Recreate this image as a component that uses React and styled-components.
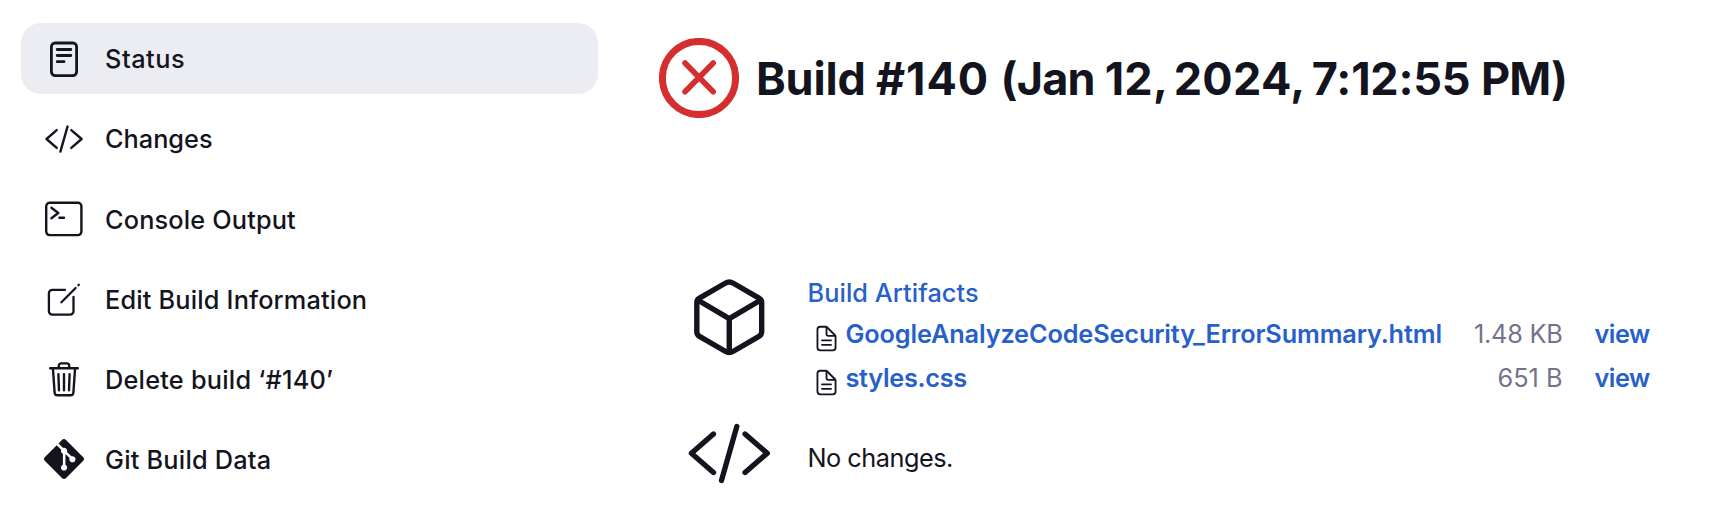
import React from "react";
import styled, { createGlobalStyle } from "styled-components";
import { SiGit } from "react-icons/si";

const GlobalStyle = createGlobalStyle`
  * { box-sizing: border-box; }
  body {
    margin: 0;
    background: #fff;
    color: #14141f;
    font-family: Inter, "Liberation Sans", sans-serif;
    font-size: 25.3px;
  }
`;

const Page = styled.div`
  display: flex;
  align-items: flex-start;
  width: 1736px;
  height: 518px;
  overflow: hidden;
`;

const SidePanel = styled.nav`
  display: flex;
  flex-direction: column;
  gap: 9.2px;
  flex: none;
  width: 577px;
  margin: 23px 0 0 21px;
`;

const Task = styled.a`
  display: flex;
  align-items: center;
  gap: 21px;
  height: 71px;
  padding-left: 23px;
  border-radius: 20px;
  background: ${(p) => (p.$active ? "#ecedf3" : "transparent")};
  svg { flex: none; display: block; }
`;

const Text = styled.span`
  font-weight: ${(p) => p.$weight || 500};
  letter-spacing: ${(p) => p.$spacing || 0}px;
  white-space: nowrap;
`;

const TaskLabel = styled(Text)`
  padding-top: 0.4px;
`;

const Main = styled.main`
  flex: none;
  width: 1000px;
  margin: 38px 0 0 61px;
`;

const Header = styled.header`
  display: flex;
  align-items: center;
  gap: 17px;
  height: 80px;
  svg { flex: none; display: block; }
`;

const Title = styled.h1`
  margin: 1px 0 0;
  font-size: 45px;
  font-weight: 700;
  line-height: 80px;
  white-space: pre;
`;

const TitlePart = styled.span`
  letter-spacing: ${(p) => p.$spacing}px;
  word-spacing: ${(p) => p.$gap || 0}px;
`;

const Section = styled.section`
  display: flex;
  align-items: flex-start;
  gap: 35px;
  margin-top: ${(p) => p.$top}px;
  padding-left: 27px;
  svg { flex: none; display: block; }
`;

const Artifacts = styled.div`
  display: flex;
  flex-direction: column;
`;

const SectionLink = styled(Text)`
  color: #2860cb;
  height: 38px;
  line-height: 38px;
`;

const FileRow = styled.div`
  display: grid;
  grid-template-columns: 24px 596px 131px auto;
  align-items: center;
  height: 44px;
  padding-left: 4px;
  line-height: 44px;
`;

const FileIconCell = styled.span`
  padding: 10px 0 0;
`;

const FileLink = styled(Text)`
  color: #2860cb;
  padding-left: 10px;
`;

const Size = styled(Text)`
  color: #73738c;
  text-align: right;
`;

const ViewLink = styled(Text)`
  color: #2860cb;
  padding-left: 32px;
`;

const Message = styled(Text)`
  line-height: 40px;
  padding-top: 28.3px;
`;

function Icon({ stroke = 2.4, size = 40, box = "0 0 40 40", children }) {
  return (
    <svg
      width={size}
      height={size}
      viewBox={box}
      fill="none"
      stroke="currentColor"
      strokeWidth={stroke}
      strokeLinecap="round"
      strokeLinejoin="round"
    >
      {children}
    </svg>
  );
}

const StatusIcon = () => (
  <Icon stroke={2.8}>
    <rect x="7.4" y="4" width="25.2" height="32.6" rx="3.8" />
    <path d="M13.2 10.5H26.8M13.2 16.5H26.8M13.2 22.7H20" />
  </Icon>
);

const CodeIcon = ({ size, stroke = 2.4 }) => (
  <Icon size={size} stroke={stroke}>
    <path d="M12.7 11.1L2.5 20L12.7 28.9M23.5 7.6L16.4 32.6M27.3 11.1L37.6 20L27.3 28.9" />
  </Icon>
);

const ConsoleIcon = () => (
  <Icon>
    <rect x="2.2" y="3.7" width="35.2" height="32.4" rx="3.5" />
    <path d="M7.4 8.8L14.3 14L7.4 19.2M15.4 18.7H20" />
  </Icon>
);

const EditIcon = () => (
  <Icon stroke={2.3}>
    <path d="M21 10.8H8.4A3.5 3.5 0 0 0 4.9 14.3V32.2A3.5 3.5 0 0 0 8.4 35.7H26A3.5 3.5 0 0 0 29.5 32.2V17.8M17.4 23.2L31.6 9M34.4 6.2L34.8 5.8" />
  </Icon>
);

const TrashIcon = () => (
  <Icon stroke={2.4}>
    <path d="M8.9 9.2L10.6 33.5A3 3 0 0 0 13.5 36.3H26.5A3 3 0 0 0 29.4 33.5L31.1 9.2M6.2 9.2H33.8M14.8 9V6.7A2.3 2.3 0 0 1 17.1 4.4H22.9A2.3 2.3 0 0 1 25.2 6.7V9M14.4 15.2L15 31.2M20 15.2V31.2M25.6 15.2L25 31.2" />
  </Icon>
);

const FailedIcon = () => (
  <svg width="80" height="80" viewBox="0 0 80 80" fill="none" stroke="#d42e2e">
    <circle cx="40" cy="40" r="36.6" strokeWidth="7" />
    <path d="M26 25L54.2 53.8M54.2 25L26 53.8" strokeWidth="5.6" strokeLinecap="round" />
  </svg>
);

const CubeIcon = () => (
  <Icon size={86.5} box="0 0 512 512" stroke={32}>
    <path d="M448 341.37V170.61A32 32 0 00432.11 143l-152-88.46a47.94 47.94 0 00-48.24 0L79.89 143A32 32 0 0064 170.61v170.76A32 32 0 0079.89 369l152 88.46a48 48 0 0048.24 0l152-88.46A32 32 0 00448 341.37z" />
    <path d="M69 153.99l187 110 187-110M256 463.99v-200" />
  </Icon>
);

const FileIcon = () => (
  <Icon size={29} box="0 0 512 512" stroke={32}>
    <path d="M416 221.25V416a48 48 0 01-48 48H144a48 48 0 01-48-48V96a48 48 0 0148-48h98.75a32 32 0 0122.62 9.37l141.26 141.26a32 32 0 019.37 22.62z" />
    <path d="M256 56v120a32 32 0 0032 32h120M176 288h160M176 368h160" />
  </Icon>
);

const tasks = [
  { label: "Status", icon: <StatusIcon />, active: true, spacing: 0.55 },
  { label: "Changes", icon: <CodeIcon size={40} />, spacing: 0 },
  { label: "Console Output", icon: <ConsoleIcon />, spacing: 0.16 },
  { label: "Edit Build Information", icon: <EditIcon />, spacing: 0.18 },
  { label: "Delete build ‘#140’", icon: <TrashIcon />, spacing: 0.23 },
  { label: "Git Build Data", icon: <SiGit size={40} />, spacing: 0.22 },
];

const titleParts = [
  { text: "Build ", spacing: -0.2 },
  { text: "#140 ", spacing: 0.9 },
  { text: "(Jan ", spacing: -0.8 },
  { text: "12, ", spacing: 0.3, gap: -4.2 },
  { text: "2024, ", spacing: 0.3, gap: -3.2 },
  { text: "7:12:55 ", spacing: -0.2 },
  { text: "PM)", spacing: -0.9 },
];

const files = [
  { name: "GoogleAnalyzeCodeSecurity_ErrorSummary.html", size: "1.48 KB", spacing: -0.14, sizeSpacing: -0.25 },
  { name: "styles.css", size: "651 B", spacing: -0.3, sizeSpacing: 0 },
];

export default function App() {
  return (
    <Page>
      <GlobalStyle />
      <SidePanel>
        {tasks.map((t) => (
          <Task key={t.label} $active={t.active}>
            {t.icon}
            <TaskLabel $spacing={t.spacing}>{t.label}</TaskLabel>
          </Task>
        ))}
      </SidePanel>
      <Main>
        <Header>
          <FailedIcon />
          <Title>
            {titleParts.map((p) => (
              <TitlePart key={p.text} $spacing={p.spacing} $gap={p.gap}>{p.text}</TitlePart>
            ))}
          </Title>
        </Header>
        <Section $top={155.7}>
          <CubeIcon />
          <Artifacts>
            <SectionLink $weight={550} $spacing={0.06}>Build Artifacts</SectionLink>
            {files.map((f) => (
              <FileRow key={f.name}>
                <FileIconCell>
                  <FileIcon />
                </FileIconCell>
                <FileLink $weight={600} $spacing={f.spacing}>{f.name}</FileLink>
                <Size $weight={400} $spacing={f.sizeSpacing}>{f.size}</Size>
                <ViewLink $weight={600} $spacing={-0.5}>view</ViewLink>
              </FileRow>
            ))}
          </Artifacts>
        </Section>
        <Section $top={10.3}>
          <CodeIcon size={86.5} stroke={2.45} />
          <Message $weight={400} $spacing={-0.5}>No changes.</Message>
        </Section>
      </Main>
    </Page>
  );
}
